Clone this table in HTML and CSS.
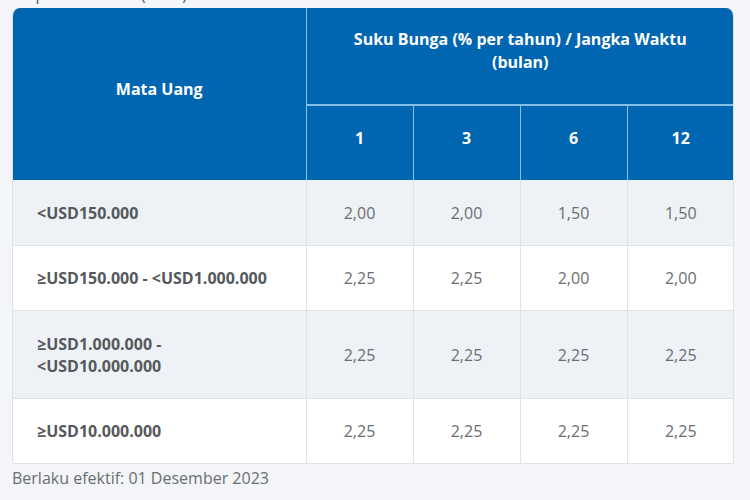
FILE: index.html
```html
<!DOCTYPE html>
<html lang="id">
<head>
<meta charset="utf-8">
<link rel="stylesheet" href="styles.css">
</head>
<body>
<div class="page">
  <h2 class="title">Deposito Valas (USD)</h2>
  <div class="table-wrap">
    <table class="rates">
      <colgroup>
        <col class="c-first"><col class="c-num"><col class="c-num"><col class="c-num"><col class="c-num">
      </colgroup>
      <thead>
        <tr class="h1">
          <th rowspan="2" class="th-cur">Mata Uang</th>
          <th colspan="4" class="th-group">Suku Bunga (% per tahun) / Jangka Waktu (bulan)</th>
        </tr>
        <tr class="h2">
          <th>1</th><th>3</th><th>6</th><th>12</th>
        </tr>
      </thead>
      <tbody>
        <tr class="odd">
          <td class="cur">&lt;USD150.000</td><td>2,00</td><td>2,00</td><td>1,50</td><td>1,50</td>
        </tr>
        <tr>
          <td class="cur">≥USD150.000 - &lt;USD1.000.000</td><td>2,25</td><td>2,25</td><td>2,00</td><td>2,00</td>
        </tr>
        <tr class="odd">
          <td class="cur">≥USD1.000.000 -<br>&lt;USD10.000.000</td><td>2,25</td><td>2,25</td><td>2,25</td><td>2,25</td>
        </tr>
        <tr>
          <td class="cur">≥USD10.000.000</td><td>2,25</td><td>2,25</td><td>2,25</td><td>2,25</td>
        </tr>
      </tbody>
    </table>
  </div>
  <p class="note">Berlaku efektif: 01 Desember 2023</p>
</div>
</body>
</html>
```
FILE: styles.css
```css
html, body {
  margin: 0;
  padding: 0;
  background: #f3f5f8;
  font-family: "Open Sans", "Liberation Sans", sans-serif;
}
.page {
  padding: 8px 16px 0 12px;
  width: 722px;
}
.title {
  margin: -27px 0 3px 0;
  height: 24px;
  font-size: 18px;
  line-height: 24px;
  font-weight: 400;
  color: #666b70;
}
.table-wrap {
  width: 722px;
  border-radius: 8px 8px 2px 2px;
  overflow: hidden;
  border: 1px solid #dde2e7;
  border-top: none;
  box-sizing: border-box;
}
.rates {
  width: 100%;
  border-collapse: collapse;
  table-layout: fixed;
}
.c-first { width: 293px; }
.c-num { width: 107px; }
.rates th {
  background: #0066b2;
  color: #ffffff;
  font-weight: 700;
  font-size: 16px;
  line-height: 23px;
  text-align: center;
  vertical-align: middle;
  padding: 0 12px;
}
.h1 { height: 97px; }
.h2 { height: 75px; }
.th-cur {
  padding-bottom: 10px !important;
  border-right: 1px solid #86bfe8;
}
.h1 th.th-group {
  padding: 0 40px 10px;
  border-bottom: 2px solid #86bfe8;
}
.h2 th {
  padding-bottom: 9px;
  border-left: 1px solid #86bfe8;
}
.h2 th:first-child { border-left: none; }
.rates td {
  font-size: 16px;
  line-height: 22px;
  color: #6b6e71;
  text-align: center;
  vertical-align: middle;
  padding: 21.5px 12px 21px;
  border-left: 1px solid #dfe3e7;
  border-top: 1px solid #dfe3e7;
  background: #ffffff;
}
.rates tbody tr:first-child td { border-top: none; }
.rates tr.odd td { background: #eef2f6; }
.rates td.cur {
  text-align: left;
  font-weight: 700;
  color: #55595d;
  padding-left: 24px;
  border-left: none;
}
.note {
  margin: 3px 0 0 0;
  font-size: 16px;
  line-height: 22px;
  color: #6b6e71;
}
```
